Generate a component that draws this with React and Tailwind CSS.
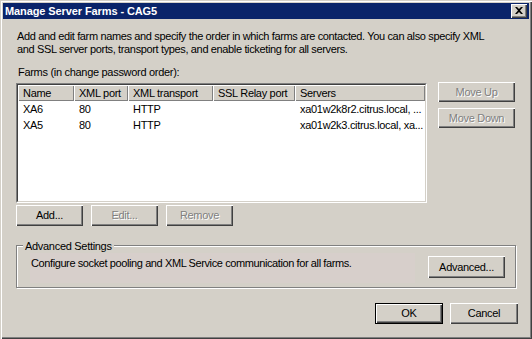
import React from 'react'
import clsx from 'clsx'

const raised =
  'shadow-[inset_1px_1px_0_#ffffff,inset_-1px_-1px_0_#404040,inset_-2px_-2px_0_#808080]'

function Button({ children, disabled, isDefault, className }) {
  return (
    <div
      className={clsx(
        'flex items-center justify-center bg-[#d4d0c8] text-[11px] leading-none',
        isDefault ? 'border border-black' : '',
        raised,
        disabled ? 'text-[#808080] [text-shadow:1px_1px_0_#ffffff]' : 'text-black',
        className
      )}
    >
      {children}
    </div>
  )
}

const columns = [
  { label: 'Name', w: 'w-[56px]' },
  { label: 'XML port', w: 'w-[54px]' },
  { label: 'XML transport', w: 'w-[85px]' },
  { label: 'SSL Relay port', w: 'w-[82px]' },
  { label: 'Servers', w: 'flex-1' },
]

const farms = [
  ['XA6', '80', 'HTTP', '', 'xa01w2k8r2.citrus.local, ...'],
  ['XA5', '80', 'HTTP', '', 'xa01w2k3.citrus.local, xa...'],
]

function App() {
  return (
    <div className="w-[532px] h-[339px] bg-[#d4d0c8] flex flex-col font-['Liberation_Sans',Arial,sans-serif] text-[11px] tracking-[-0.3px] text-black shadow-[inset_1px_1px_0_#d4d0c8,inset_2px_2px_0_#ffffff,inset_-1px_-1px_0_#404040,inset_-2px_-2px_0_#808080] overflow-hidden">
      {/* title bar */}
      <div className="mt-[3px] mx-[3px] h-[16px] bg-[#0a246a] flex items-center justify-between pl-[2px] pr-[2px]">
        <span className="text-white font-bold text-[11px] leading-none tracking-[-0.1px]">
          Manage Server Farms - CAG5
        </span>
        <div className={clsx('w-[16px] h-[14px] bg-[#d4d0c8] flex items-center justify-center', raised)}>
          <svg width="8" height="7" viewBox="0 0 8 7" className="mr-[1px] mb-[1px]">
            <path d="M0 0h2l2 2 2-2h2L5 3.5 8 7H6L4 5 2 7H0l3-3.5z" fill="#000" />
          </svg>
        </div>
      </div>

      <div className="flex flex-col px-[16px]">
        <p className="mt-[11px] leading-[13px] pl-[1px] whitespace-nowrap tracking-[-0.36px]">
          Add and edit farm names and specify the order in which farms are contacted. You can also specify XML
          <br />
          and SSL server ports, transport types, and enable ticketing for all servers.
        </p>

        <p className="mt-[10px] leading-[13px] pl-[2px]">Farms (in change password order):</p>

        <div className="mt-[4px] flex items-start">
          {/* list view */}
          <div className="w-[411px] h-[120px] border border-t-[#808080] border-l-[#808080] border-b-white border-r-white">
            <div className="h-full bg-white border border-t-[#404040] border-l-[#404040] border-b-[#d4d0c8] border-r-[#d4d0c8] flex flex-col overflow-hidden">
              <div className="flex h-[16px] shrink-0">
                {columns.map((c) => (
                  <div
                    key={c.label}
                    className={clsx(
                      c.w,
                      'bg-[#d4d0c8] flex items-center pl-[5px] leading-none whitespace-nowrap',
                      'shadow-[inset_1px_1px_0_#ffffff,inset_-1px_-1px_0_#808080]'
                    )}
                  >
                    {c.label}
                  </div>
                ))}
              </div>
              {farms.map((row) => (
                <div key={row[0]} className="flex h-[16px] items-center">
                  {row.map((cell, i) => (
                    <div
                      key={i}
                      className={clsx(columns[i].w, 'pl-[5px] whitespace-nowrap overflow-hidden leading-none')}
                    >
                      {cell}
                    </div>
                  ))}
                </div>
              ))}
            </div>
          </div>

          <div className="ml-[11px] -mt-[1px] flex flex-col gap-[6px]">
            <Button disabled className="w-[77px] h-[20px]">Move Up</Button>
            <Button disabled className="w-[77px] h-[20px]">Move Down</Button>
          </div>
        </div>

        <div className="mt-[2px] flex gap-[8px]">
          <Button className="w-[67px] h-[21px]">Add...</Button>
          <Button disabled className="w-[67px] h-[21px]">Edit...</Button>
          <Button disabled className="w-[67px] h-[21px]">Remove</Button>
        </div>

        {/* group box */}
        <div className="mt-[19px] w-[500px] h-[43px] border border-[#808080] shadow-[inset_1px_1px_0_#ffffff,1px_1px_0_#ffffff] flex flex-col">
          <div className="-mt-[6px] ml-[6px] px-[2px] w-fit leading-[13px] bg-[#d4d0c8]">Advanced Settings</div>
          <div className="flex items-start justify-between">
            <div className="ml-[13px] w-[385px] h-[30px] bg-[#d7cfcb] pt-[4px] pl-[1px] leading-[13px] tracking-[-0.4px]">
              Configure socket pooling and XML Service communication for all farms.
            </div>
            <Button className="w-[77px] h-[22px] mr-[10px] mt-[3px]">Advanced...</Button>
          </div>
        </div>

        <div className="mt-[15px] flex justify-end gap-[7px] mr-[-2px]">
          <Button isDefault className="w-[68px] h-[21px]">OK</Button>
          <Button className="w-[68px] h-[21px]">Cancel</Button>
        </div>
      </div>
    </div>
  )
}

export default App
